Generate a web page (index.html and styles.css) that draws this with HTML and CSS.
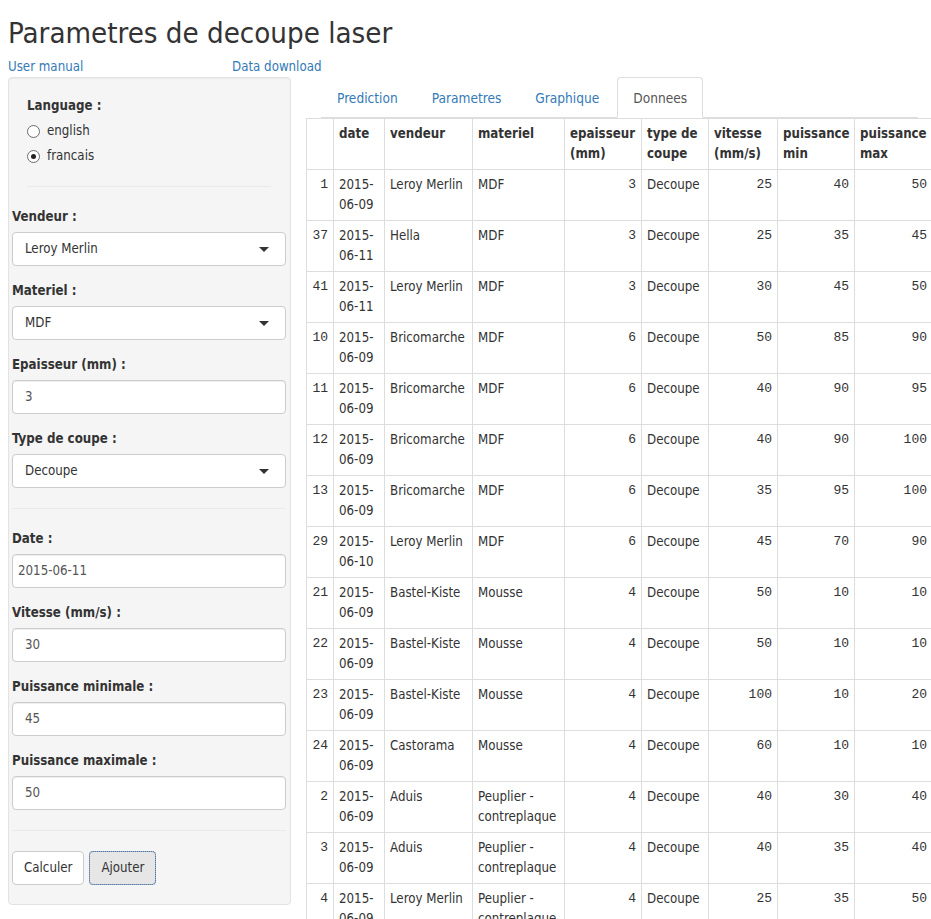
FILE: index.html
```html
<!DOCTYPE html>
<html lang="fr">
<head>
<meta charset="utf-8">
<title>Parametres de decoupe laser</title>
<link rel="stylesheet" href="styles.css">
</head>
<body>
<div class="page">
  <h2 class="title">Parametres de decoupe laser</h2>
  <div class="links">
    <a class="link link-first" href="#">User manual</a>
    <a class="link" href="#">Data download</a>
  </div>
  <div class="layout">
    <aside class="well">
      <div class="lang">
        <div class="label">Language :</div>
        <div class="radio"><span class="radio-circle"></span>english</div>
        <div class="radio"><span class="radio-circle checked"></span>francais</div>
        <hr class="rule">
      </div>
      <div class="form-group">
        <div class="label">Vendeur :</div>
        <div class="control select">Leroy Merlin</div>
      </div>
      <div class="form-group">
        <div class="label">Materiel :</div>
        <div class="control select">MDF</div>
      </div>
      <div class="form-group">
        <div class="label">Epaisseur (mm) :</div>
        <div class="control">3</div>
      </div>
      <div class="form-group">
        <div class="label">Type de coupe :</div>
        <div class="control select">Decoupe</div>
      </div>
      <hr class="rule">
      <div class="form-group">
        <div class="label">Date :</div>
        <div class="control control-date">2015-06-11</div>
      </div>
      <div class="form-group">
        <div class="label">Vitesse (mm/s) :</div>
        <div class="control">30</div>
      </div>
      <div class="form-group">
        <div class="label">Puissance minimale :</div>
        <div class="control">45</div>
      </div>
      <div class="form-group">
        <div class="label">Puissance maximale :</div>
        <div class="control">50</div>
      </div>
      <hr class="rule">
      <div class="buttons">
        <button class="btn" type="button">Calculer</button>
        <button class="btn btn-focus" type="button">Ajouter</button>
      </div>
    </aside>
    <main class="main">
      <ul class="tabs">
        <li class="tab"><a href="#">Prediction</a></li>
        <li class="tab"><a href="#">Parametres</a></li>
        <li class="tab"><a href="#">Graphique</a></li>
        <li class="tab active"><a href="#">Donnees</a></li>
      </ul>
      <table class="data">
        <colgroup>
          <col class="w-idx"><col class="w-date"><col class="w-vend"><col class="w-mat"><col class="w-ep"><col class="w-type"><col class="w-vit"><col class="w-pmin"><col class="w-pmax">
        </colgroup>
        <thead>
          <tr><th></th><th>date</th><th>vendeur</th><th>materiel</th><th>epaisseur (mm)</th><th>type de coupe</th><th>vitesse (mm/s)</th><th>puissance min</th><th>puissance max</th></tr>
        </thead>
        <tbody>
          <tr><td class="num">1</td><td>2015-06-09</td><td>Leroy Merlin</td><td>MDF</td><td class="num">3</td><td>Decoupe</td><td class="num">25</td><td class="num">40</td><td class="num">50</td></tr>
          <tr><td class="num">37</td><td>2015-06-11</td><td>Hella</td><td>MDF</td><td class="num">3</td><td>Decoupe</td><td class="num">25</td><td class="num">35</td><td class="num">45</td></tr>
          <tr><td class="num">41</td><td>2015-06-11</td><td>Leroy Merlin</td><td>MDF</td><td class="num">3</td><td>Decoupe</td><td class="num">30</td><td class="num">45</td><td class="num">50</td></tr>
          <tr><td class="num">10</td><td>2015-06-09</td><td>Bricomarche</td><td>MDF</td><td class="num">6</td><td>Decoupe</td><td class="num">50</td><td class="num">85</td><td class="num">90</td></tr>
          <tr><td class="num">11</td><td>2015-06-09</td><td>Bricomarche</td><td>MDF</td><td class="num">6</td><td>Decoupe</td><td class="num">40</td><td class="num">90</td><td class="num">95</td></tr>
          <tr><td class="num">12</td><td>2015-06-09</td><td>Bricomarche</td><td>MDF</td><td class="num">6</td><td>Decoupe</td><td class="num">40</td><td class="num">90</td><td class="num">100</td></tr>
          <tr><td class="num">13</td><td>2015-06-09</td><td>Bricomarche</td><td>MDF</td><td class="num">6</td><td>Decoupe</td><td class="num">35</td><td class="num">95</td><td class="num">100</td></tr>
          <tr><td class="num">29</td><td>2015-06-10</td><td>Leroy Merlin</td><td>MDF</td><td class="num">6</td><td>Decoupe</td><td class="num">45</td><td class="num">70</td><td class="num">90</td></tr>
          <tr><td class="num">21</td><td>2015-06-09</td><td>Bastel-Kiste</td><td>Mousse</td><td class="num">4</td><td>Decoupe</td><td class="num">50</td><td class="num">10</td><td class="num">10</td></tr>
          <tr><td class="num">22</td><td>2015-06-09</td><td>Bastel-Kiste</td><td>Mousse</td><td class="num">4</td><td>Decoupe</td><td class="num">50</td><td class="num">10</td><td class="num">10</td></tr>
          <tr><td class="num">23</td><td>2015-06-09</td><td>Bastel-Kiste</td><td>Mousse</td><td class="num">4</td><td>Decoupe</td><td class="num">100</td><td class="num">10</td><td class="num">20</td></tr>
          <tr><td class="num">24</td><td>2015-06-09</td><td>Castorama</td><td>Mousse</td><td class="num">4</td><td>Decoupe</td><td class="num">60</td><td class="num">10</td><td class="num">10</td></tr>
          <tr><td class="num">2</td><td>2015-06-09</td><td>Aduis</td><td>Peuplier - contreplaque</td><td class="num">4</td><td>Decoupe</td><td class="num">40</td><td class="num">30</td><td class="num">40</td></tr>
          <tr><td class="num">3</td><td>2015-06-09</td><td>Aduis</td><td>Peuplier - contreplaque</td><td class="num">4</td><td>Decoupe</td><td class="num">40</td><td class="num">35</td><td class="num">40</td></tr>
          <tr><td class="num">4</td><td>2015-06-09</td><td>Leroy Merlin</td><td>Peuplier - contreplaque</td><td class="num">4</td><td>Decoupe</td><td class="num">25</td><td class="num">35</td><td class="num">50</td></tr>
          <tr><td class="num">5</td><td>2015-06-09</td><td>Leroy Merlin</td><td>Peuplier - contreplaque</td><td class="num">4</td><td>Decoupe</td><td class="num">30</td><td class="num">40</td><td class="num">50</td></tr>
        </tbody>
      </table>
    </main>
  </div>
</div>
</body>
</html>
```
FILE: styles.css
```css
html, body {
  margin: 0;
  padding: 0;
  overflow: hidden;
  background: #fff;
}

body {
  font-family: "DejaVu Sans Condensed", "DejaVu Sans", sans-serif;
  font-size: 13.2px;
  line-height: 20px;
  color: #333;
}

.page {
  padding: 0 0 0 8px;
}

.title {
  margin: 17px 0 0;
  font-size: 29.2px;
  font-weight: normal;
  line-height: 32px;
  color: #333;
}

.links {
  display: flex;
  margin-top: 8px;
  height: 20px;
}

.link {
  color: #337ab7;
  text-decoration: none;
}

.link-first {
  width: 224px;
}

.layout {
  display: flex;
  align-items: flex-start;
}

/* Sidebar */
.well {
  flex: 0 0 283px;
  box-sizing: border-box;
  width: 283px;
  padding: 18px 4px 19px 3px;
  background: #f5f5f5;
  border: 1px solid #e3e3e3;
  border-radius: 4px;
  box-shadow: inset 0 1px 1px rgba(0, 0, 0, 0.05);
}

.lang {
  padding: 0 15px;
}

.label {
  font-weight: bold;
  margin-bottom: 5px;
}

.radio {
  display: flex;
  align-items: center;
  height: 20px;
}

.radio + .radio {
  margin-top: 5px;
}

.radio-circle {
  box-sizing: border-box;
  width: 13px;
  height: 13px;
  margin-right: 7px;
  border: 1px solid #6b6b6b;
  border-radius: 50%;
  background: #fff;
  display: flex;
  align-items: center;
  justify-content: center;
}

.radio-circle.checked::after {
  content: "";
  width: 5px;
  height: 5px;
  border-radius: 50%;
  background: #222;
}

.rule {
  margin: 20px 0;
  border: 0;
  border-top: 1px solid #eaeaea;
  height: 0;
}

.form-group {
  margin-bottom: 15px;
}

.control {
  position: relative;
  box-sizing: border-box;
  height: 34px;
  padding: 6px 12px;
  background: #fff;
  border: 1px solid #ccc;
  border-radius: 4px;
  box-shadow: inset 0 1px 1px rgba(0, 0, 0, 0.075);
  color: #555;
}

.control.select {
  color: #333;
  box-shadow: none;
}

.control.select::after {
  content: "";
  position: absolute;
  right: 16px;
  top: 14px;
  border-left: 5px solid transparent;
  border-right: 5px solid transparent;
  border-top: 5px solid #333;
}

.control-date {
  padding-left: 5px;
}

.buttons {
  display: flex;
  gap: 5px;
}

.btn {
  box-sizing: border-box;
  height: 34px;
  padding: 6px 11px;
  font-family: inherit;
  font-size: 13.2px;
  line-height: 20px;
  color: #333;
  background: #fff;
  border: 1px solid #ccc;
  border-radius: 4px;
}

.btn-focus {
  background: #e6e6e6;
  border-color: #adadad;
  outline: 1px dotted #3f78c0;
  outline-offset: -1px;
}

/* Main */
.main {
  flex: 1 1 auto;
  min-width: 0;
  margin-left: 15px;
}

.tabs {
  display: flex;
  list-style: none;
  margin: 0 13px 0 15px;
  padding: 0;
  border-bottom: 1px solid #ddd;
  height: 40px;
}

.tab {
  margin-right: 2px;
  margin-bottom: -1px;
}

.tab a {
  display: block;
  padding: 10px 15px 9px;
  border: 1px solid transparent;
  border-radius: 4px 4px 0 0;
  color: #337ab7;
  text-decoration: none;
  font-size: 13.6px;
  line-height: 20px;
}

.tab.active a {
  color: #555;
  background: #fff;
  border-color: #ddd;
  border-bottom-color: transparent;
}

.data {
  table-layout: fixed;
  width: 626px;
  border-collapse: collapse;
  border: 1px solid #ddd;
}

.w-idx { width: 27px; }
.w-date { width: 51px; }
.w-vend { width: 88px; }
.w-mat { width: 92px; }
.w-ep { width: 77px; }
.w-type { width: 67px; }
.w-vit { width: 69px; }
.w-pmin { width: 77px; }
.w-pmax { width: 78px; }

.data th,
.data td {
  padding: 5px;
  border: 1px solid #ddd;
  vertical-align: top;
  text-align: left;
  line-height: 20px;
}

.data th {
  font-weight: bold;
}

.data td.num {
  text-align: right;
  font-family: "Liberation Mono", "Courier New", monospace;
  font-size: 13px;
}
```
